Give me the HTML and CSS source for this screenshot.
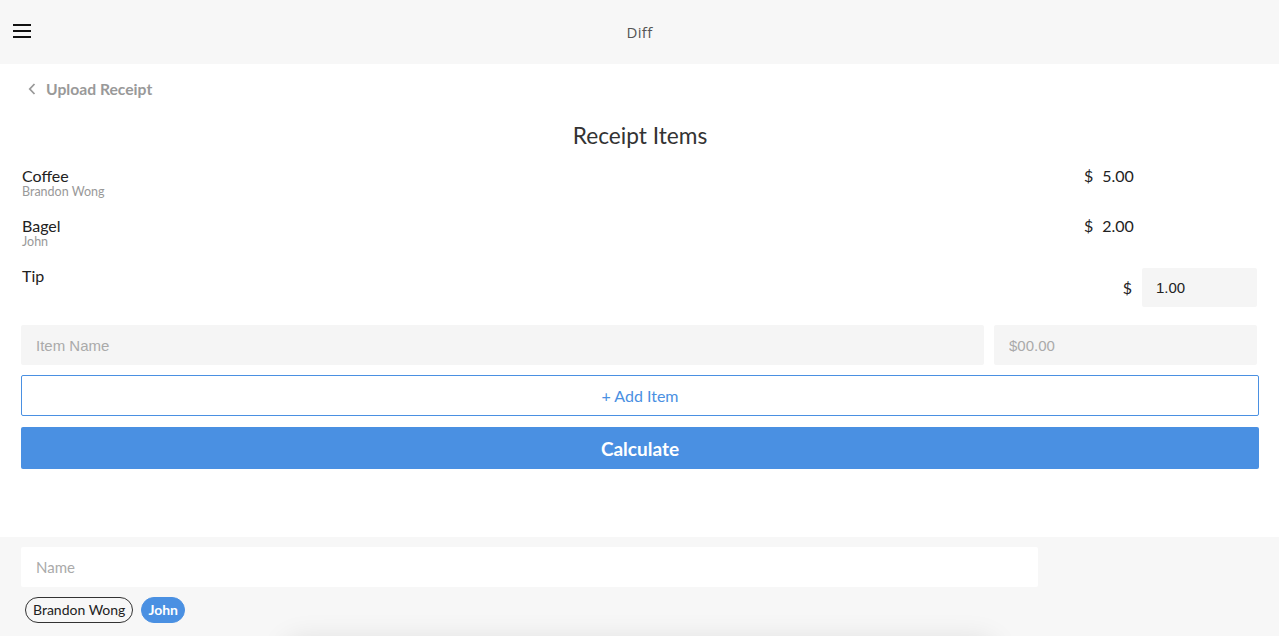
FILE: index.html
```html
<!DOCTYPE html>
<html>
<head>
<meta charset="utf-8">
<link rel="stylesheet" href="styles.css">
</head>
<body>
<header class="topbar">
  <button class="menu-btn" aria-label="menu">
    <svg width="18" height="14" viewBox="0 0 18 14"><rect x="0" y="0" width="18" height="2" fill="#111"/><rect x="0" y="6" width="18" height="2" fill="#111"/><rect x="0" y="12" width="18" height="2" fill="#111"/></svg>
  </button>
  <div class="title">Diff</div>
</header>
<main class="content">
  <a class="back-link">
    <svg width="8" height="12" viewBox="0 0 8 12"><path d="M6.5 1 L1.8 6 L6.5 11" fill="none" stroke="#999" stroke-width="1.8"/></svg>
    <span>Upload Receipt</span>
  </a>
  <h1 class="heading">Receipt Items</h1>
  <div class="items">
    <div class="item">
      <div class="item-info">
        <div class="item-name">Coffee</div>
        <div class="item-owner">Brandon Wong</div>
      </div>
      <div class="item-price"><span class="cur">$</span><span>5.00</span></div>
    </div>
    <div class="item">
      <div class="item-info">
        <div class="item-name">Bagel</div>
        <div class="item-owner">John</div>
      </div>
      <div class="item-price"><span class="cur">$</span><span>2.00</span></div>
    </div>
    <div class="item tip">
      <div class="item-info">
        <div class="item-name">Tip</div>
      </div>
      <div class="tip-price"><span class="cur">$</span><input class="tip-input" value="1.00"></div>
    </div>
  </div>
  <div class="new-item">
    <input class="field name-field" placeholder="Item Name">
    <input class="field price-field" placeholder="$00.00">
  </div>
  <button class="add-btn">+ Add Item</button>
  <button class="calc-btn">Calculate</button>
</main>
<footer class="people">
  <input class="person-field" placeholder="Name">
  <div class="chips">
    <span class="chip">Brandon Wong</span>
    <span class="chip active">John</span>
  </div>
  <div class="shadow"></div>
</footer>
</body>
</html>
```
FILE: styles.css
```css
* { box-sizing: border-box; }
html, body { margin: 0; padding: 0; }
body {
  font-family: Lato, "Open Sans", sans-serif;
  color: #222;
  background: #fff;
  height: 636px;
  overflow: hidden;
  display: flex;
  flex-direction: column;
}
.topbar {
  height: 64px;
  flex: none;
  background: #f7f7f7;
  display: flex;
  align-items: center;
  justify-content: center;
  position: relative;
}
.menu-btn {
  position: absolute;
  left: 13px;
  top: 24px;
  padding: 0;
  border: 0;
  background: none;
  line-height: 0;
}
.title {
  font-family: "Open Sans", Lato, sans-serif;
  font-size: 15px;
  color: #555;
  font-weight: 500;
  letter-spacing: 0.3px;
}
.content {
  flex: none;
  padding: 14px 20px 0 21px;
  height: 473px;
}
.back-link {
  display: flex;
  align-items: center;
  gap: 10px;
  padding-left: 7px;
  height: 21px;
  color: #999;
  font-size: 15.7px;
  font-weight: 700;
}
.heading {
  margin: 23px 0 0 0;
  text-align: center;
  font-size: 22.7px;
  font-weight: 400;
  color: #333;
  line-height: 28px;
}
.items {
  margin-top: 17px;
  display: flex;
  flex-direction: column;
}
.item {
  display: flex;
  justify-content: space-between;
  height: 50px;
  padding-left: 1px;
}
.item.tip { height: 48px; }
.item-name {
  font-size: 16px;
  line-height: 18px;
  color: #222;
}
.item-owner {
  font-size: 12.5px;
  line-height: 14px;
  color: #999;
}
.item-price {
  width: 175px;
  font-size: 16px;
  line-height: 18px;
  color: #222;
  display: flex;
  gap: 9px;
}
.tip-price {
  display: flex;
  align-items: center;
  gap: 10px;
  height: 39px;
  margin-top: 1px;
  font-size: 16px;
  margin-right: 2px;
}
.tip-input {
  width: 115px;
  height: 39px;
  border: 0;
  background: #f5f5f5;
  border-radius: 2px;
  padding: 0 14px;
  font-family: "Liberation Sans", Arial, sans-serif;
  font-size: 15px;
  color: #222;
}
.new-item {
  display: flex;
  gap: 10px;
  margin-top: 10px;
  padding-right: 2px;
}
.field {
  height: 40px;
  border: 0;
  background: #f5f5f5;
  border-radius: 2px;
  padding: 0 15px;
  font-family: "Liberation Sans", Arial, sans-serif;
  font-size: 15px;
}
.field::placeholder, .person-field::placeholder { color: #aaa; }
.name-field { flex: 1; }
.price-field { width: 263px; }
.add-btn {
  display: block;
  width: 100%;
  margin-top: 10px;
  height: 41px;
  background: #fff;
  border: 1px solid #4a90e2;
  border-radius: 2px;
  color: #4a90e2;
  font-family: Lato, sans-serif;
  font-size: 16px;
}
.calc-btn {
  display: block;
  width: 100%;
  margin-top: 11px;
  height: 42px;
  background: #4a90e2;
  border: 0;
  border-radius: 2px;
  color: #fff;
  font-family: Lato, sans-serif;
  font-size: 19px;
  font-weight: 700;
}
.people {
  flex: 1;
  background: #f7f7f7;
  padding: 10px 21px 0 21px;
  position: relative;
  overflow: hidden;
}
.person-field {
  width: 1017px;
  height: 40px;
  border: 0;
  background: #fff;
  border-radius: 2px;
  padding: 0 15px;
  font-family: Lato, sans-serif;
  font-size: 15px;
  display: block;
}
.chips {
  display: flex;
  gap: 8px;
  margin-top: 10px;
  padding-left: 4px;
}
.chip {
  height: 26px;
  line-height: 24px;
  padding: 0 7px;
  border: 1px solid #333;
  border-radius: 13px;
  font-size: 14px;
  color: #222;
}
.chip.active {
  background: #4a90e2;
  border-color: #4a90e2;
  color: #fff;
  font-weight: 700;
  padding: 0 6px;
}
.shadow {
  position: absolute;
  left: 290px;
  width: 700px;
  top: 112px;
  height: 20px;
  border-radius: 10px;
  box-shadow: 0 -4px 28px 6px rgba(0,0,0,0.10);
}
```
